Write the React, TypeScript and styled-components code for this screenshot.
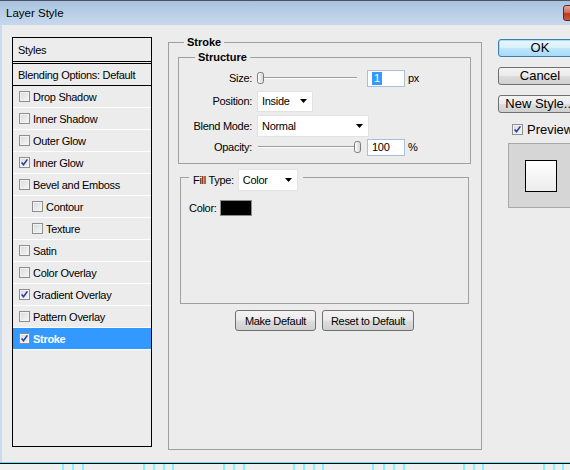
import React from 'react';
import styled, { createGlobalStyle, css } from 'styled-components';

const GlobalStyle = createGlobalStyle`
  html, body {
    margin: 0;
    padding: 0;
    overflow: hidden;
    background: #ececec;
  }
  body {
    font-family: "Liberation Sans", Arial, sans-serif;
    color: #000;
  }
`;

type StyleRow = { label: string; checked?: boolean; indent?: boolean; selected?: boolean };

const styleRows: StyleRow[] = [
  { label: 'Drop Shadow' },
  { label: 'Inner Shadow' },
  { label: 'Outer Glow' },
  { label: 'Inner Glow', checked: true },
  { label: 'Bevel and Emboss' },
  { label: 'Contour', indent: true },
  { label: 'Texture', indent: true },
  { label: 'Satin' },
  { label: 'Color Overlay' },
  { label: 'Gradient Overlay', checked: true },
  { label: 'Pattern Overlay' },
  { label: 'Stroke', checked: true, selected: true },
];

const rulerTicks = [62, 72, 82, 143, 153, 163, 172, 223, 233, 243, 293, 303, 313, 322, 372, 383, 393, 403, 463, 473, 482, 543, 553, 562];

const CheckBox: React.FC<{ checked?: boolean }> = ({ checked }) => (
  <CheckSquare>
    {checked && (
      <svg width="9" height="9" viewBox="0 0 9 9">
        <path d="M1.6 4.6 L3.5 6.8 L7.4 1.4" fill="none" stroke="#2b3c9e" strokeWidth="1.6" />
      </svg>
    )}
  </CheckSquare>
);

const DownArrow = () => (
  <ArrowSvg width="7" height="4" viewBox="0 0 7 4">
    <path d="M0 0 H7 L3.5 4 Z" fill="#000" />
  </ArrowSvg>
);

const SliderControl: React.FC<{ pos: number }> = ({ pos }) => (
  <Slider>
    <Thumb style={{ left: pos }} width="7" height="12" viewBox="0 0 7 12">
      <defs>
        <linearGradient id="thumbFill" x1="0" y1="0" x2="1" y2="0">
          <stop offset="0" stopColor="#ffffff" />
          <stop offset="1" stopColor="#d4d4d4" />
        </linearGradient>
      </defs>
      <rect x="0.5" y="0.5" width="6" height="11" rx="2.2" fill="url(#thumbFill)" stroke="#7c7c7c" />
    </Thumb>
  </Slider>
);

export default function App() {
  return (
    <>
      <GlobalStyle />
      <Window>
        <TitleBar>
          <TitleText>Layer Style</TitleText>
          <CloseButton />
        </TitleBar>
        <Body>
          <StylesPanel>
            <PanelHeader>Styles</PanelHeader>
            <BlendingRow>Blending Options: Default</BlendingRow>
            {styleRows.map(row => (
              <PanelRow key={row.label} $indent={row.indent} $selected={row.selected}>
                <CheckBox checked={row.checked} />
                <RowLabel>{row.label}</RowLabel>
              </PanelRow>
            ))}
          </StylesPanel>

          <StrokeGroup>
            <GroupLegend $offset={6}>Stroke</GroupLegend>
            <StructureGroup>
              <GroupLegend $offset={16}>Structure</GroupLegend>
              <FormRow $h={18}>
                <FieldLabel>Size:</FieldLabel>
                <SliderControl pos={0} />
                <NumberInput>
                  <Selection>1</Selection>
                </NumberInput>
                <Unit>px</Unit>
              </FormRow>
              <FormRow $h={22} $gap={3}>
                <FieldLabel>Position:</FieldLabel>
                <Select $w={56}>
                  Inside
                  <DownArrow />
                </Select>
              </FormRow>
              <FormRow $h={22} $gap={3}>
                <FieldLabel>Blend Mode:</FieldLabel>
                <Select $w={112} $h={22}>
                  Normal
                  <DownArrow />
                </Select>
              </FormRow>
              <FormRow $h={18} $gap={1}>
                <FieldLabel>Opacity:</FieldLabel>
                <SliderControl pos={97} />
                <NumberInput>100</NumberInput>
                <Unit>%</Unit>
              </FormRow>
            </StructureGroup>

            <FillGroup>
              <FillLegend>
                Fill Type:
                <Select $w={60} $h={22}>
                  Color
                  <DownArrow />
                </Select>
              </FillLegend>
              <ColorRow>
                Color:
                <ColorSwatch />
              </ColorRow>
            </FillGroup>

            <ButtonRow>
              <PushButton $w={81}>Make Default</PushButton>
              <PushButton $w={92}>Reset to Default</PushButton>
            </ButtonRow>
          </StrokeGroup>

          <SideColumn>
            <DialogButton $default>OK</DialogButton>
            <DialogButton>Cancel</DialogButton>
            <DialogButton>New Style...</DialogButton>
            <PreviewToggle>
              <CheckBox checked />
              <PreviewLabel>Preview</PreviewLabel>
            </PreviewToggle>
            <PreviewWell>
              <PreviewSwatch />
            </PreviewWell>
          </SideColumn>
        </Body>
        <Ruler width="570" height="8" viewBox="0 0 570 8">
          <rect x="0" y="0" width="570" height="8" fill="#efefef" />
          <rect x="0" y="0" width="570" height="1" fill="#52e4f2" />
          <rect x="0" y="1" width="570" height="1" fill="#000" />
          {rulerTicks.map(x => (
            <rect key={x} x={x} y="2" width="2" height="6" fill="#86f1f8" />
          ))}
        </Ruler>
      </Window>
    </>
  );
}

const smallText = css`
  font-size: 11px;
  letter-spacing: -0.3px;
`;

const Window = styled.div`
  width: 570px;
  height: 470px;
  display: flex;
  flex-direction: column;
  overflow: hidden;
  background: #ececec;
`;

const TitleBar = styled.div`
  height: 25px;
  box-sizing: border-box;
  flex-shrink: 0;
  display: flex;
  align-items: center;
  padding-left: 6px;
  border-top: 1px solid #4b5360;
  background: linear-gradient(#a9c2df, #bcd1e8 60%, #c6d8ec);
`;

const TitleText = styled.span`
  font-size: 11.5px;
  color: #000;
`;

const CloseButton = styled.div`
  width: 22px;
  height: 16px;
  align-self: flex-start;
  margin-top: 4px;
  margin-left: auto;
  margin-right: -15px;
  box-sizing: border-box;
  border: 1px solid #5a2a24;
  border-radius: 3px;
  background: linear-gradient(#e8a596, #d2705c 45%, #b83a22 55%, #c85a3c);
`;

const Body = styled.div`
  flex: 1;
  min-height: 0;
  display: flex;
  align-items: flex-start;
  border-left: 2px solid #cbdaec;
  padding-left: 10px;
`;

const StylesPanel = styled.div`
  width: 140px;
  height: 410px;
  margin-top: 12px;
  flex-shrink: 0;
  box-sizing: border-box;
  border: 1px solid #000;
  ${smallText};
`;

const PanelHeader = styled.div`
  height: 23px;
  display: flex;
  align-items: center;
  padding-left: 5px;
  border-bottom: 3px double #000;
`;

const BlendingRow = styled.div`
  height: 21px;
  display: flex;
  align-items: center;
  padding-left: 5px;
  border-bottom: 1px solid #000;
`;

const PanelRow = styled.div<{ $indent?: boolean; $selected?: boolean }>`
  height: 21px;
  display: flex;
  align-items: center;
  padding-left: ${p => (p.$indent ? 19 : 6)}px;
  border-bottom: 1px solid #ffffff;
  ${p =>
    p.$selected &&
    css`
      background: #3399ff;
      color: #fff;
      font-weight: bold;
    `}
`;

const RowLabel = styled.span`
  margin-left: 3px;
`;

const CheckSquare = styled.span`
  width: 11px;
  height: 11px;
  box-sizing: border-box;
  flex-shrink: 0;
  display: flex;
  align-items: center;
  justify-content: center;
  border: 1px solid #8e8f8f;
  background: linear-gradient(135deg, #d9d9d9, #f7f7f7);
  box-shadow: inset 0 0 0 1px #f2f2f2;
`;

const StrokeGroup = styled.fieldset`
  width: 314px;
  height: 414px;
  box-sizing: border-box;
  min-width: 0;
  flex-shrink: 0;
  margin: 11px 0 0 16px;
  padding: 2px 10px 0 9px;
  border: 1px solid #a0a0a0;
`;

const GroupLegend = styled.legend<{ $offset: number }>`
  margin-left: ${p => p.$offset}px;
  padding: 0 3px;
  font-size: 11px;
  line-height: 13px;
  font-weight: bold;
`;

const StructureGroup = styled.fieldset`
  min-width: 0;
  margin: 0;
  padding: 5px 0 7px 0;
  border: 1px solid #a0a0a0;
`;

const FormRow = styled.div<{ $h: number; $gap?: number }>`
  height: ${p => p.$h}px;
  margin-top: ${p => p.$gap ?? 0}px;
  display: flex;
  align-items: center;
  ${smallText};
`;

const FieldLabel = styled.span`
  width: 73px;
  margin-right: 5px;
  text-align: right;
  flex-shrink: 0;
`;

const Slider = styled.div`
  position: relative;
  width: 100px;
  height: 12px;
  flex-shrink: 0;

  &::before {
    content: '';
    position: absolute;
    left: 1px;
    right: 0;
    top: 5px;
    height: 0;
    border-top: 1px solid #9c9c9c;
    border-bottom: 1px solid #ffffff;
  }
`;

const Thumb = styled.svg`
  position: absolute;
  top: 0;
  display: block;
`;

const NumberInput = styled.div`
  width: 38px;
  height: 17px;
  margin-left: 10px;
  box-sizing: border-box;
  display: flex;
  align-items: center;
  padding-left: 4px;
  background: #fff;
  border: 1px solid #a9bfdb;
`;

const Selection = styled.span`
  background: #3399ff;
  color: #fff;
  padding: 0 2px;
  line-height: 13px;
`;

const Unit = styled.span`
  margin-left: 3px;
`;

const Select = styled.div<{ $w: number; $h?: number }>`
  width: ${p => p.$w}px;
  height: ${p => p.$h ?? 21}px;
  box-sizing: border-box;
  display: flex;
  align-items: center;
  padding-left: 4px;
  background: #fff;
  border: 1px solid #e2e2e2;
  ${smallText};
  font-weight: normal;
`;

const ArrowSvg = styled.svg`
  display: block;
  margin-left: auto;
  margin-right: 5px;
`;

const FillGroup = styled.fieldset`
  height: 140px;
  box-sizing: border-box;
  min-width: 0;
  margin: 0 2px;
  padding: 9px 0 0 8px;
  border: 1px solid #a0a0a0;
`;

const FillLegend = styled.legend`
  display: flex;
  align-items: center;
  gap: 4px;
  margin-left: 0;
  padding: 5px 5px 0 4px;
  ${smallText};
`;

const ColorRow = styled.div`
  display: flex;
  align-items: center;
  ${smallText};
`;

const ColorSwatch = styled.div`
  width: 32px;
  height: 16px;
  margin-left: 3px;
  box-sizing: border-box;
  background: #000;
  border: 1px solid #8c8c8c;
`;

const ButtonRow = styled.div`
  display: flex;
  justify-content: center;
  gap: 6px;
  margin-top: 6px;
`;

const buttonFace = css`
  box-sizing: border-box;
  padding: 0;
  border: 1px solid #707070;
  border-radius: 3px;
  background: linear-gradient(#f3f3f3, #ebebeb 48%, #dddddd 52%, #cfcfcf);
  font-family: "Liberation Sans", Arial, sans-serif;
  color: #000;
  text-align: center;
`;

const PushButton = styled.button<{ $w: number }>`
  ${buttonFace};
  width: ${p => p.$w}px;
  height: 21px;
  ${smallText};
`;

const SideColumn = styled.div`
  width: 90px;
  flex-shrink: 0;
  margin: 14px 0 0 16px;
  display: flex;
  flex-direction: column;
`;

const DialogButton = styled.button<{ $default?: boolean }>`
  ${buttonFace};
  width: 84px;
  height: 18px;
  margin-bottom: 10px;
  font-size: 13px;
  line-height: 16px;
  ${p =>
    p.$default &&
    css`
      border-color: #3c7fb1;
      box-shadow: inset 0 0 0 1px #a6dcf5;
      background: linear-gradient(#eaf6fd, #d9f0fc 48%, #bee6fd 52%, #a7d9f5);
    `}
`;

const PreviewToggle = styled.div`
  height: 12px;
  display: flex;
  align-items: center;
  margin-left: 14px;
`;

const PreviewLabel = styled.span`
  margin-left: 4px;
  font-size: 13px;
`;

const PreviewWell = styled.div`
  width: 66px;
  height: 65px;
  margin: 8px 0 0 10px;
  box-sizing: border-box;
  display: flex;
  align-items: center;
  justify-content: center;
  background: #d6d6d6;
  border: 1px solid #a8a8a8;
`;

const PreviewSwatch = styled.div`
  width: 32px;
  height: 32px;
  box-sizing: border-box;
  border: 1px solid #000;
  background: linear-gradient(#ffffff, #ececec);
`;

const Ruler = styled.svg`
  display: block;
  flex-shrink: 0;
`;
